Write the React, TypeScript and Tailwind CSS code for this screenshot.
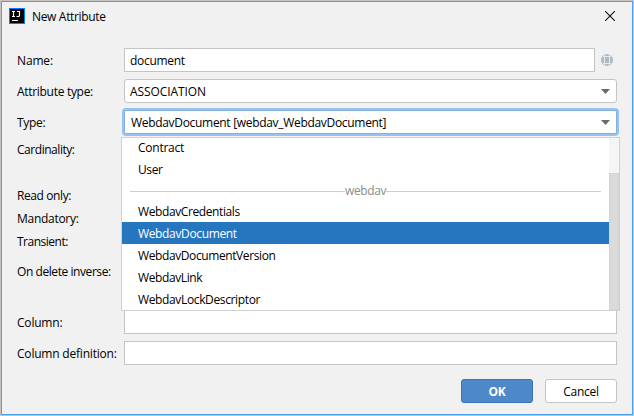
import type { ReactNode } from "react";

function Label({ children, className = "" }: { children: ReactNode; className?: string }) {
  return <label className={`w-[107px] shrink-0 ${className}`}>{children}</label>;
}

function Caret() {
  return (
    <svg width="9" height="5" viewBox="0 0 9 5" className="shrink-0">
      <path d="M0 0H9L4.5 5Z" fill="#6b6b6b" />
    </svg>
  );
}

function Option({ children, selected = false, className = "" }: { children: ReactNode; selected?: boolean; className?: string }) {
  return (
    <li className={`flex h-[22px] items-center pl-4 ${selected ? "bg-[#2675bf] text-white" : ""}`}>
      <span className={className}>{children}</span>
    </li>
  );
}

function TypePopup() {
  return (
    <div className="absolute -left-[4px] top-[26px] z-10 flex h-[174px] w-[499px] border border-[#d0d0d0] bg-white">
      <ul className="-mt-px flex-1">
        <Option className="tracking-[-0.25px]">Contract</Option>
        <Option className="tracking-[-0.4px]">User</Option>
        <li className="flex h-[19px] items-center px-2 text-[#8c8c8c]">
          <span className="mt-[2px] h-px flex-1 bg-[#cdcdcd]" />
          <span className="pt-px tracking-[-0.4px]">webdav</span>
          <span className="mt-[2px] h-px flex-1 bg-[#cdcdcd]" />
        </li>
        <Option className="pt-[2px] tracking-[-0.4px]">WebdavCredentials</Option>
        <Option selected className="pt-[2px] tracking-[-0.35px]">WebdavDocument</Option>
        <Option className="pt-[2px] tracking-[-0.4px]">WebdavDocumentVersion</Option>
        <Option className="pt-[2px] tracking-[-0.4px]">WebdavLink</Option>
        <Option className="pt-[2px] tracking-[-0.36px]">WebdavLockDescriptor</Option>
      </ul>
      <div className="w-[10px] bg-[#f5f5f5] pt-[35px]">
        <div className="h-[137px] border border-[#d4d4d4] bg-[#dadada]" />
      </div>
    </div>
  );
}

export default function App() {
  return (
    <div className="h-[416px] w-[634px] bg-[#c6c3c0] p-px font-['Open_Sans','Noto_Sans',sans-serif] text-[12px] leading-4 text-black">
      <div className="flex h-[414px] w-[632px] flex-col border border-[#4f9ff0] bg-[#f1f1f1]">
        <header className="flex h-[28px] shrink-0 items-center pl-[7px] pr-[17px]">
          <svg width="16" height="16" viewBox="0 0 16 16" className="shrink-0">
            <rect width="16" height="16" fill="#087cfa" />
            <rect x="1" y="1" width="14" height="14" fill="#000" />
            <path d="M3 3.5H6M4.5 3V9M3 8.5H6M8 3.5H11M10.5 3V7.5L9.8 8.5H7.5M3 12.5H9" stroke="#fff" strokeWidth="1.2" fill="none" />
          </svg>
          <h1 className="ml-[7px] flex-1 pt-[2px] tracking-[-0.33px]">New Attribute</h1>
          <svg width="10" height="10" viewBox="0 0 10 10">
            <path d="M0 0L10 10M10 0L0 10" stroke="#111" strokeWidth="1.1" />
          </svg>
        </header>

        <main className="flex flex-col pl-[15px] pr-[15px] pt-[18px]">
          <div className="flex h-6 items-center">
            <Label className="pt-[2px] tracking-[-0.15px]">Name:</Label>
            <div className="flex h-6 w-[471px] items-center border border-[#c4c4c4] bg-white pl-[5px] pt-[2px] tracking-[-0.3px]">document</div>
            <svg width="12" height="12" viewBox="0 0 12 12" className="ml-[6px]">
              <circle cx="6" cy="6" r="6" fill="#afb9bf" />
              <path d="M3.5 0V12M8.5 0V12M2 2.5H10M2 9.5H10" stroke="#e7eaeb" strokeWidth="1" />
            </svg>
          </div>
          <div className="mt-[7px] flex h-6 items-center">
            <Label className="pt-[2px] tracking-[-0.3px]">Attribute type:</Label>
            <div className="flex h-6 w-[493px] items-center justify-between rounded-[3px] border border-[#c4c4c4] bg-white pl-[5px] pr-[6px]">
              <span className="pt-[2px] tracking-[-0.1px]">ASSOCIATION</span>
              <Caret />
            </div>
          </div>
          <div className="mt-[7px] flex h-6 items-center">
            <Label className="pt-[2px] tracking-[-0.3px]">Type:</Label>
            <div className="relative flex h-6 w-[493px] items-center justify-between rounded-[2px] border border-[#87afda] bg-white pl-[6px] pr-[6px] shadow-[0_0_0_2px_#97c3f3]">
              <span className="pt-[2px] tracking-[-0.31px]">WebdavDocument [webdav_WebdavDocument]</span>
              <Caret />
              <TypePopup />
            </div>
          </div>
          <Label className="mt-[8px] tracking-[-0.46px]">Cardinality:</Label>
          <Label className="mt-[30px] tracking-[-0.4px]">Read only:</Label>
          <Label className="mt-[7px] tracking-[-0.28px]">Mandatory:</Label>
          <Label className="mt-[7px] tracking-[-0.5px]">Transient:</Label>
          <Label className="mt-[14px] tracking-[-0.43px]">On delete inverse:</Label>
          <div className="mt-[30px] flex h-6 items-center">
            <Label className="pt-[2px] tracking-[-0.2px]">Column:</Label>
            <div className="h-6 w-[493px] border border-[#c4c4c4] bg-white" />
          </div>
          <div className="mt-[7px] flex h-6 items-center">
            <Label className="pt-[2px] tracking-[-0.2px]">Column definition:</Label>
            <div className="h-6 w-[493px] border border-[#c4c4c4] bg-white" />
          </div>
        </main>

        <footer className="mt-[14px] flex justify-end gap-3 pr-[15px]">
          <button className="h-6 w-[72px] rounded-[3px] border border-[#3b73b3] bg-[#4d89c9] pt-[2px] font-bold tracking-[-0.3px] text-white">OK</button>
          <button className="h-6 w-[72px] rounded-[3px] border border-[#c4c4c4] bg-white pt-[2px] tracking-[-0.3px]">Cancel</button>
        </footer>
      </div>
    </div>
  );
}
